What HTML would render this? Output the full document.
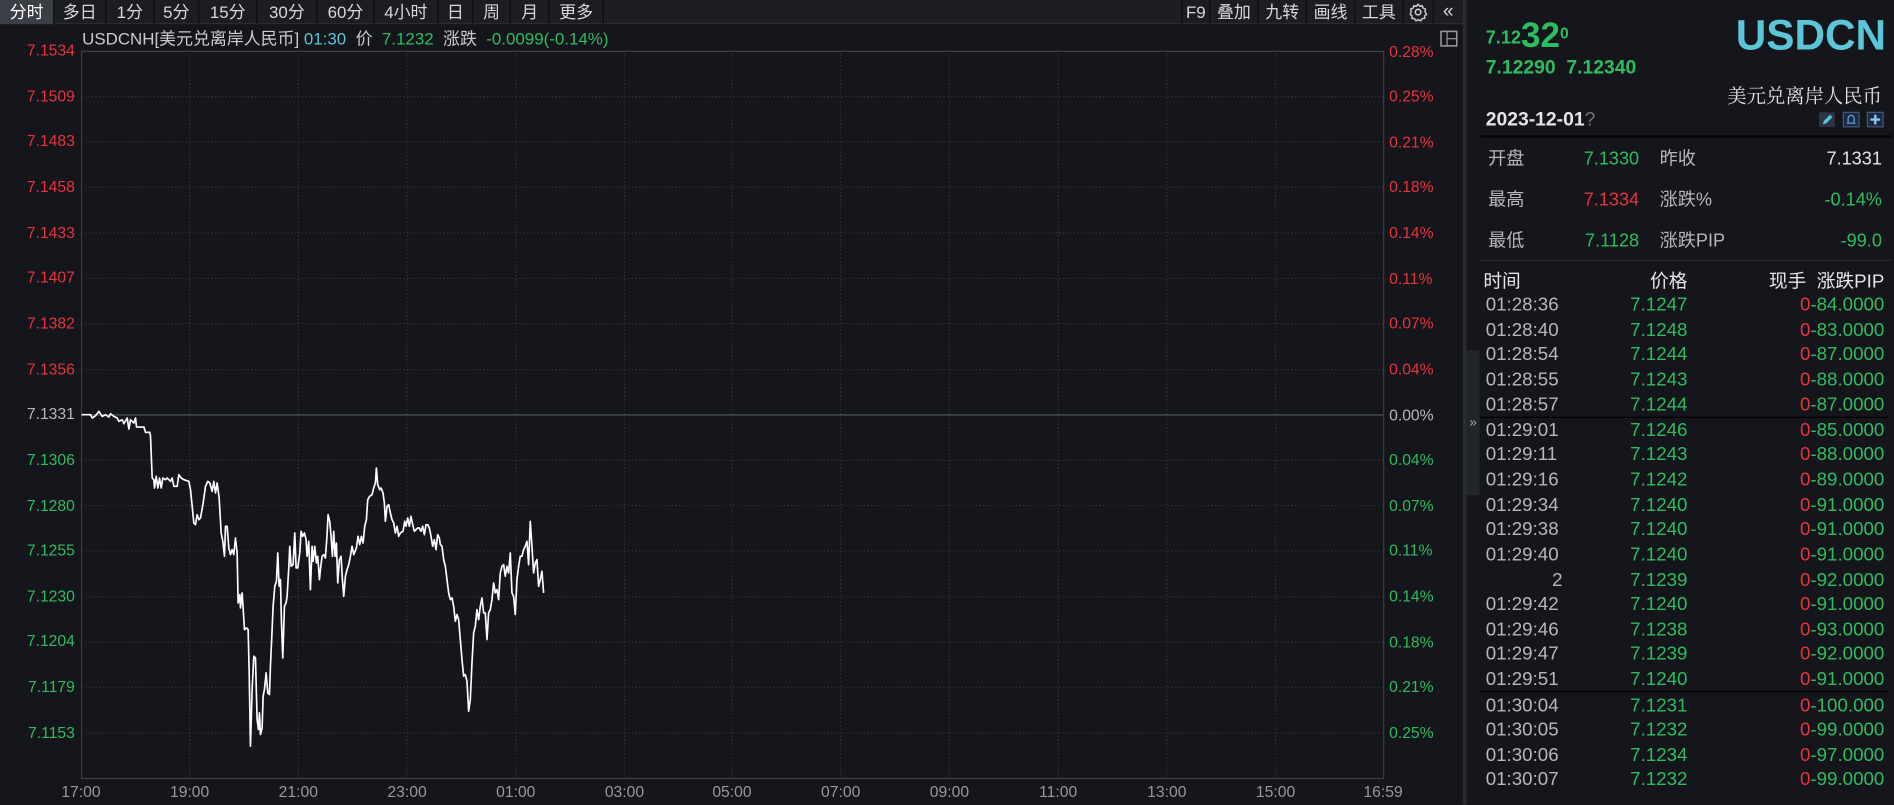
<!DOCTYPE html>
<html><head><meta charset="utf-8">
<style>
*{margin:0;padding:0;box-sizing:border-box}
body{width:1894px;height:805px;background:#14161b;overflow:hidden;font-family:"Liberation Sans","Noto Sans CJK SC",sans-serif}
#w{position:absolute;left:0;top:0;width:1568px;height:666px;transform-origin:0 0;transform:scale(1.20791);background:#14161b}
.a{position:absolute;white-space:nowrap}
.tb{position:absolute;top:0;height:20px;line-height:20px;font-size:14px;color:#d8d8d8;text-align:center;border-right:1px solid #0c0d10}
.g{color:#2dbd5e}.r{color:#e8333d}.c{color:#5ac6d6}.w{color:#e6e6e6}.gr{color:#b8b8b8}
.yl{position:absolute;left:0;width:62px;text-align:right;font-size:13px}
.yr{position:absolute;left:1150px;font-size:13px}
.xl{position:absolute;top:648px;font-size:13px;color:#999;width:50px;text-align:center}
.row{position:absolute;left:1228px;width:336px;height:20px;font-size:15.5px;line-height:20px}
.st{font-size:15px}
.row span{position:absolute}
</style></head><body>
<div id="w">
<div class="a" style="left:0;top:0;width:1212px;height:20px;background:#1b1d22;border-bottom:1px solid #2a2c31"></div>
<div class="tb" style="left:0;width:45px;background:#3b3e45;color:#fff">分时</div>
<div class="tb" style="left:45px;width:43px">多日</div>
<div class="tb" style="left:88px;width:40px">1分</div>
<div class="tb" style="left:128px;width:37px">5分</div>
<div class="tb" style="left:165px;width:48px">15分</div>
<div class="tb" style="left:213px;width:50px">30分</div>
<div class="tb" style="left:263px;width:47px">60分</div>
<div class="tb" style="left:310px;width:53px">4小时</div>
<div class="tb" style="left:363px;width:29px">日</div>
<div class="tb" style="left:392px;width:31px">周</div>
<div class="tb" style="left:423px;width:32px">月</div>
<div class="tb" style="left:455px;width:45px">更多</div>
<div class="tb" style="left:978px;width:24px;border-left:1px solid #0c0d10">F9</div>
<div class="tb" style="left:1002px;width:40px">叠加</div>
<div class="tb" style="left:1042px;width:40px">九转</div>
<div class="tb" style="left:1082px;width:40px">画线</div>
<div class="tb" style="left:1122px;width:40px">工具</div>
<div class="tb" style="left:1162px;width:25px">
<svg width="16" height="16" viewBox="0 0 16 16" style="margin-top:2px"><circle cx="8" cy="8" r="2.3" fill="none" stroke="#ccc" stroke-width="1.3"/><path d="M8 1.5l1.4 1.6 2.1-.4.6 2 2 .8-.4 2.1L15 10l-1.6 1.1.1 2.1-2.1.2-1.2 1.8-2-.9-2 .9-1.2-1.8-2.1-.2.1-2.1L1.5 10l.8-2.4-.4-2.1 2-.8.6-2 2.1.4z" fill="none" stroke="#ccc" stroke-width="1.2"/></svg></div>
<div class="tb" style="left:1187px;width:25px;font-size:16px">«</div>

<svg class="a" style="left:0;top:0" width="1568" height="666">
<g stroke="#34373d" stroke-width="1" stroke-dasharray="1,2">
<line x1="67" y1="80" x2="1145" y2="80"/><line x1="67" y1="117.5" x2="1145" y2="117.5"/><line x1="67" y1="155" x2="1145" y2="155"/><line x1="67" y1="193" x2="1145" y2="193"/><line x1="67" y1="230.5" x2="1145" y2="230.5"/><line x1="67" y1="268" x2="1145" y2="268"/><line x1="67" y1="306" x2="1145" y2="306"/><line x1="67" y1="381" x2="1145" y2="381"/><line x1="67" y1="418.5" x2="1145" y2="418.5"/><line x1="67" y1="456" x2="1145" y2="456"/><line x1="67" y1="494" x2="1145" y2="494"/><line x1="67" y1="531.5" x2="1145" y2="531.5"/><line x1="67" y1="569" x2="1145" y2="569"/><line x1="67" y1="607" x2="1145" y2="607"/>
<line x1="157" y1="42" x2="157" y2="644"/><line x1="247" y1="42" x2="247" y2="644"/><line x1="337" y1="42" x2="337" y2="644"/><line x1="427" y1="42" x2="427" y2="644"/><line x1="517" y1="42" x2="517" y2="644"/><line x1="606" y1="42" x2="606" y2="644"/><line x1="696" y1="42" x2="696" y2="644"/><line x1="786" y1="42" x2="786" y2="644"/><line x1="876" y1="42" x2="876" y2="644"/><line x1="966" y1="42" x2="966" y2="644"/><line x1="1056" y1="42" x2="1056" y2="644"/>
</g>
<line x1="67" y1="343.5" x2="1145" y2="343.5" stroke="#55585e"/>
<path d="M67.5 644V42.5H1145.5V644.5H67" fill="none" stroke="#3b3e44"/>
<rect x="1193" y="26" width="13" height="12" fill="none" stroke="#999" stroke-width="1.3"/><line x1="1198" y1="26" x2="1198" y2="38" stroke="#999"/><line x1="1198" y1="32" x2="1206" y2="32" stroke="#999"/>
</svg>
<svg class="a" style="left:0;top:0" width="1568" height="666" viewBox="0 0 1894 805">
<g transform="translate(60,400) scale(0.33333)"><polyline fill="none" stroke="#fff" stroke-width="5" stroke-linejoin="round" points="63,45 90,45 95,55 105,48 115,35 125,50 135,45 145,52 150,42 160,50 170,55 175,65 185,60 190,72 200,55 205,88 210,60 220,70 225,55 228,82 250,82 255,98 268,98 270,110 275,235 280,240 282,265 287,230 292,265 297,235 302,265 307,235 315,240 320,235 330,245 335,235 340,260 350,260 355,225 362,235 370,240 385,245 390,270 395,320 400,370 405,375 410,345 415,360 420,355 428,310 435,260 442,245 448,250 455,275 460,245 465,280 470,250 476,295 482,400 487,425 492,470 495,380 500,380 505,445 510,465 515,450 520,465 525,415 530,460 533,610 538,585 540,625 545,580 548,625 552,690 558,685 563,690 566,810 570,1040 575,870 580,770 585,775 590,960 594,990 597,940 600,1005 605,985 608,890 612,870 617,820 622,880 627,885 630,800 635,690 638,620 643,560 648,545 652,460 656,560 660,540 663,665 667,775 672,620 677,610 680,590 685,505 688,440 692,500 698,495 703,400 707,505 712,505 718,460 722,395 727,410 732,400 737,420 740,470 745,425 750,570 755,440 758,485 763,440 768,490 772,470 777,540 780,510 785,470 790,465 795,475 800,405 803,345 808,365 812,410 816,470 820,395 824,470 828,430 832,550 837,480 842,470 846,540 850,590 855,530 860,510 865,495 870,470 875,440 880,465 888,445 893,410 898,435 903,410 908,430 913,380 918,360 922,300 928,290 935,285 940,265 945,250 948,205 952,255 958,270 962,265 968,280 972,310 975,365 980,320 985,315 990,340 995,360 1000,370 1005,400 1010,380 1015,410 1020,400 1028,395 1033,365 1037,380 1042,355 1047,380 1052,350 1057,375 1062,395 1067,390 1072,385 1077,385 1082,395 1087,380 1092,405 1097,375 1102,375 1107,385 1112,410 1117,440 1122,420 1127,450 1132,405 1137,415 1140,435 1145,440 1150,480 1155,500 1160,540 1165,580 1170,600 1175,595 1180,620 1185,665 1190,645 1195,660 1200,720 1205,780 1210,830 1215,825 1220,845 1225,935 1230,900 1235,790 1240,700 1245,680 1250,630 1255,660 1260,620 1265,595 1270,640 1275,640 1280,720 1285,640 1290,630 1295,600 1300,550 1305,580 1310,570 1315,600 1320,520 1325,500 1330,495 1335,530 1340,500 1345,520 1350,460 1355,580 1360,590 1365,645 1370,540 1375,500 1380,470 1385,470 1390,450 1395,440 1400,425 1405,495 1410,365 1415,440 1420,520 1425,490 1430,480 1435,560 1440,540 1445,515 1450,580"/></g>
</svg>

<div class="a" style="left:68px;top:22px;font-size:14px;color:#ccc">USDCNH[美元兑离岸人民币] <span class="c">01:30</span>&nbsp; 价&nbsp; <span class="g">7.1232</span>&nbsp; 涨跌&nbsp; <span class="g">-0.0099(-0.14%)</span></div>

<div class="yl r" style="top:34px">7.1534</div><div class="yl r" style="top:72px">7.1509</div><div class="yl r" style="top:109px">7.1483</div><div class="yl r" style="top:147px">7.1458</div><div class="yl r" style="top:185px">7.1433</div><div class="yl r" style="top:222px">7.1407</div><div class="yl r" style="top:260px">7.1382</div><div class="yl r" style="top:298px">7.1356</div><div class="yl gr" style="top:335px">7.1331</div><div class="yl g" style="top:373px">7.1306</div><div class="yl g" style="top:411px">7.1280</div><div class="yl g" style="top:448px">7.1255</div><div class="yl g" style="top:486px">7.1230</div><div class="yl g" style="top:523px">7.1204</div><div class="yl g" style="top:561px">7.1179</div><div class="yl g" style="top:599px">7.1153</div>
<div class="yr r" style="top:35px">0.28%</div><div class="yr r" style="top:72px">0.25%</div><div class="yr r" style="top:110px">0.21%</div><div class="yr r" style="top:147px">0.18%</div><div class="yr r" style="top:185px">0.14%</div><div class="yr r" style="top:223px">0.11%</div><div class="yr r" style="top:260px">0.07%</div><div class="yr r" style="top:298px">0.04%</div><div class="yr gr" style="top:336px">0.00%</div><div class="yr g" style="top:373px">0.04%</div><div class="yr g" style="top:411px">0.07%</div><div class="yr g" style="top:448px">0.11%</div><div class="yr g" style="top:486px">0.14%</div><div class="yr g" style="top:524px">0.18%</div><div class="yr g" style="top:561px">0.21%</div><div class="yr g" style="top:599px">0.25%</div>
<div class="xl" style="left:42px">17:00</div><div class="xl" style="left:132px">19:00</div><div class="xl" style="left:222px">21:00</div><div class="xl" style="left:312px">23:00</div><div class="xl" style="left:402px">01:00</div><div class="xl" style="left:492px">03:00</div><div class="xl" style="left:581px">05:00</div><div class="xl" style="left:671px">07:00</div><div class="xl" style="left:761px">09:00</div><div class="xl" style="left:851px">11:00</div><div class="xl" style="left:941px">13:00</div><div class="xl" style="left:1031px">15:00</div><div class="xl" style="left:1120px">16:59</div>

<div class="a" style="left:1211px;top:0;width:3px;height:666px;background:#2a2c31"></div>
<div class="a" style="left:1214px;top:290px;width:11px;height:120px;background:#22252b;color:#aaa;font-size:11px;line-height:120px;text-align:center">»</div>
<div class="a g" style="left:1230px;top:11px;font-weight:bold;font-size:15px">7.12<span style="font-size:29px;position:relative;top:3px">32</span><span style="font-size:13px;position:relative;top:-4px">0</span></div>
<div class="a g" style="left:1230px;top:48px;font-weight:bold;font-size:16px">7.12290&nbsp; 7.12340</div>
<div class="a c" style="left:1437px;top:10px;font-weight:bold;font-size:35px">USDCN</div>
<div class="a w" style="left:1400px;width:158px;text-align:right;top:67px;font-size:16px;font-family:'Liberation Serif','Noto Serif CJK SC',serif">美元兑离岸人民币</div>
<div class="a w" style="left:1230px;top:91px;font-weight:bold;font-size:16px">2023-12-01<span style="color:#777;font-weight:normal">?</span></div>
<svg class="a" style="left:1505px;top:92px" width="55" height="14"><rect x="1" y="1" width="13" height="12" fill="#2b3546"/><path d="M4 11l1-3 5-5 2 2-5 5z" fill="#5ac6d6"/><rect x="21" y="1" width="13" height="12" fill="#1e2a3c" stroke="#3a5a88"/><path d="M24 10h7M25 10V6a2.5 2.5 0 015 0v4" fill="none" stroke="#6aa0e0"/><rect x="41" y="1" width="13" height="12" fill="#1e2a3c" stroke="#3a5a88"/><path d="M47.5 3v8M43.5 7h8" stroke="#8ac0ff" stroke-width="2"/></svg>
<div class="a" style="left:1226px;top:112px;width:340px;height:2px;background:#050607"></div>
<div class="row st gr" style="top:122px"><span style="left:4px">开盘</span><span class="g" style="right:207px">7.1330</span><span style="left:146px">昨收</span><span class="w" style="right:6px">7.1331</span></div>
<div class="row st gr" style="top:156px"><span style="left:4px">最高</span><span class="r" style="right:207px">7.1334</span><span style="left:146px">涨跌%</span><span class="g" style="right:6px">-0.14%</span></div>
<div class="row st gr" style="top:190px"><span style="left:4px">最低</span><span class="g" style="right:207px">7.1128</span><span style="left:146px">涨跌PIP</span><span class="g" style="right:6px">-99.0</span></div>
<div class="a" style="left:1226px;top:215px;width:340px;height:1px;background:#2a2c31"></div>
<div class="row w" style="top:224px"><span style="left:0">时间</span><span style="right:167px">价格</span><span style="right:4px">现手&nbsp; 涨跌PIP</span></div>
<div class="a" style="left:1226px;top:345px;width:338px;height:1px;background:#000"></div>
<div class="a" style="left:1226px;top:572px;width:338px;height:1px;background:#000"></div>

<div class="row gr" style="top:243px"><span style="left:2px">01:28:36</span><span class="g" style="right:167px">7.1247</span><span style="right:4px"><span class="r" style="position:static">0</span><span class="g" style="position:static">-84.0000</span></span></div>
<div class="row gr" style="top:264px"><span style="left:2px">01:28:40</span><span class="g" style="right:167px">7.1248</span><span style="right:4px"><span class="r" style="position:static">0</span><span class="g" style="position:static">-83.0000</span></span></div>
<div class="row gr" style="top:284px"><span style="left:2px">01:28:54</span><span class="g" style="right:167px">7.1244</span><span style="right:4px"><span class="r" style="position:static">0</span><span class="g" style="position:static">-87.0000</span></span></div>
<div class="row gr" style="top:305px"><span style="left:2px">01:28:55</span><span class="g" style="right:167px">7.1243</span><span style="right:4px"><span class="r" style="position:static">0</span><span class="g" style="position:static">-88.0000</span></span></div>
<div class="row gr" style="top:326px"><span style="left:2px">01:28:57</span><span class="g" style="right:167px">7.1244</span><span style="right:4px"><span class="r" style="position:static">0</span><span class="g" style="position:static">-87.0000</span></span></div>
<div class="row gr" style="top:347px"><span style="left:2px">01:29:01</span><span class="g" style="right:167px">7.1246</span><span style="right:4px"><span class="r" style="position:static">0</span><span class="g" style="position:static">-85.0000</span></span></div>
<div class="row gr" style="top:367px"><span style="left:2px">01:29:11</span><span class="g" style="right:167px">7.1243</span><span style="right:4px"><span class="r" style="position:static">0</span><span class="g" style="position:static">-88.0000</span></span></div>
<div class="row gr" style="top:388px"><span style="left:2px">01:29:16</span><span class="g" style="right:167px">7.1242</span><span style="right:4px"><span class="r" style="position:static">0</span><span class="g" style="position:static">-89.0000</span></span></div>
<div class="row gr" style="top:409px"><span style="left:2px">01:29:34</span><span class="g" style="right:167px">7.1240</span><span style="right:4px"><span class="r" style="position:static">0</span><span class="g" style="position:static">-91.0000</span></span></div>
<div class="row gr" style="top:429px"><span style="left:2px">01:29:38</span><span class="g" style="right:167px">7.1240</span><span style="right:4px"><span class="r" style="position:static">0</span><span class="g" style="position:static">-91.0000</span></span></div>
<div class="row gr" style="top:450px"><span style="left:2px">01:29:40</span><span class="g" style="right:167px">7.1240</span><span style="right:4px"><span class="r" style="position:static">0</span><span class="g" style="position:static">-91.0000</span></span></div>
<div class="row gr" style="top:471px"><span style="left:57px">2</span><span class="g" style="right:167px">7.1239</span><span style="right:4px"><span class="r" style="position:static">0</span><span class="g" style="position:static">-92.0000</span></span></div>
<div class="row gr" style="top:491px"><span style="left:2px">01:29:42</span><span class="g" style="right:167px">7.1240</span><span style="right:4px"><span class="r" style="position:static">0</span><span class="g" style="position:static">-91.0000</span></span></div>
<div class="row gr" style="top:512px"><span style="left:2px">01:29:46</span><span class="g" style="right:167px">7.1238</span><span style="right:4px"><span class="r" style="position:static">0</span><span class="g" style="position:static">-93.0000</span></span></div>
<div class="row gr" style="top:532px"><span style="left:2px">01:29:47</span><span class="g" style="right:167px">7.1239</span><span style="right:4px"><span class="r" style="position:static">0</span><span class="g" style="position:static">-92.0000</span></span></div>
<div class="row gr" style="top:553px"><span style="left:2px">01:29:51</span><span class="g" style="right:167px">7.1240</span><span style="right:4px"><span class="r" style="position:static">0</span><span class="g" style="position:static">-91.0000</span></span></div>
<div class="row gr" style="top:575px"><span style="left:2px">01:30:04</span><span class="g" style="right:167px">7.1231</span><span style="right:4px"><span class="r" style="position:static">0</span><span class="g" style="position:static">-100.000</span></span></div>
<div class="row gr" style="top:595px"><span style="left:2px">01:30:05</span><span class="g" style="right:167px">7.1232</span><span style="right:4px"><span class="r" style="position:static">0</span><span class="g" style="position:static">-99.0000</span></span></div>
<div class="row gr" style="top:616px"><span style="left:2px">01:30:06</span><span class="g" style="right:167px">7.1234</span><span style="right:4px"><span class="r" style="position:static">0</span><span class="g" style="position:static">-97.0000</span></span></div>
<div class="row gr" style="top:636px"><span style="left:2px">01:30:07</span><span class="g" style="right:167px">7.1232</span><span style="right:4px"><span class="r" style="position:static">0</span><span class="g" style="position:static">-99.0000</span></span></div>
</div>
</body></html>
